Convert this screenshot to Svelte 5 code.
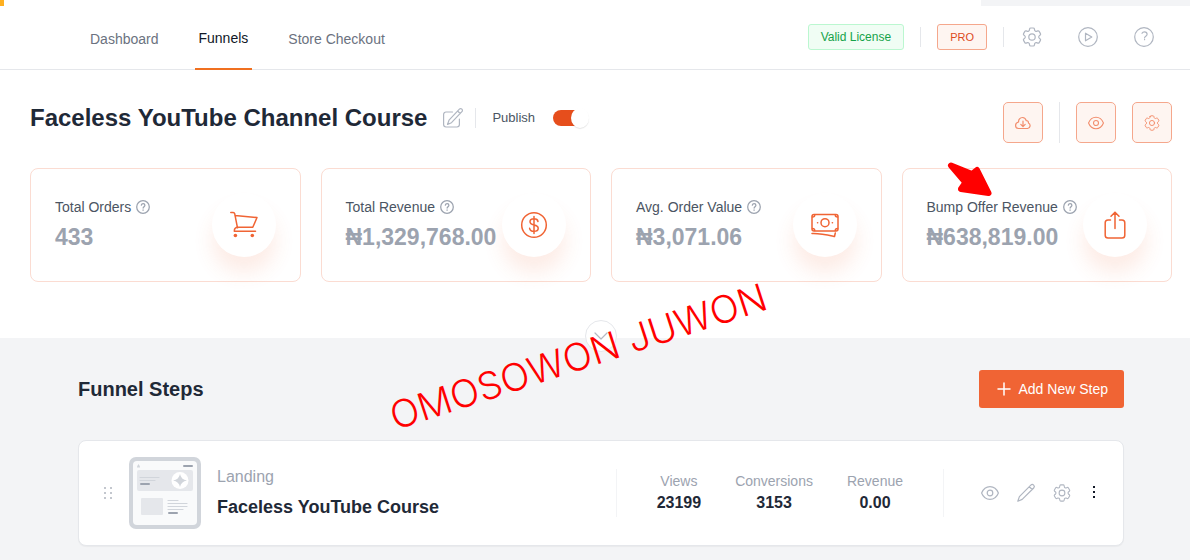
<script lang="ts">
  type Stat = { label: string; value: string; icon: 'cart' | 'dollar' | 'cash' | 'share' };

  const stats: Stat[] = [
    { label: 'Total Orders', value: '433', icon: 'cart' },
    { label: 'Total Revenue', value: '₦1,329,768.00', icon: 'dollar' },
    { label: 'Avg. Order Value', value: '₦3,071.06', icon: 'cash' },
    { label: 'Bump Offer Revenue', value: '₦638,819.00', icon: 'share' },
  ];

  const results = [
    { label: 'Views', value: '23199' },
    { label: 'Conversions', value: '3153' },
    { label: 'Revenue', value: '0.00' },
  ];

  let published = $state(true);
</script>

{#snippet gear(size: number)}
  <svg width={size} height={size} viewBox="2 2 20 20" aria-hidden="true">
    <path d="M9.594 3.94c.09-.542.56-.94 1.11-.94h2.593c.55 0 1.02.398 1.11.94l.213 1.281c.063.374.313.686.645.87.074.04.147.083.22.127.325.196.72.257 1.075.124l1.217-.456a1.125 1.125 0 0 1 1.37.49l1.296 2.247a1.125 1.125 0 0 1-.26 1.431l-1.003.827c-.293.241-.438.613-.43.992a7.723 7.723 0 0 1 0 .255c-.008.378.137.75.43.991l1.004.827c.424.35.534.955.26 1.43l-1.298 2.247a1.125 1.125 0 0 1-1.369.491l-1.217-.456c-.355-.133-.75-.072-1.076.124a6.47 6.47 0 0 1-.22.128c-.331.183-.581.495-.644.869l-.213 1.281c-.09.543-.56.94-1.11.94h-2.594c-.55 0-1.019-.398-1.11-.94l-.213-1.281c-.062-.374-.312-.686-.644-.87a6.52 6.52 0 0 1-.22-.127c-.325-.196-.72-.257-1.076-.124l-1.217.456a1.125 1.125 0 0 1-1.369-.49l-1.297-2.247a1.125 1.125 0 0 1 .26-1.431l1.004-.827c.292-.24.437-.613.43-.991a6.932 6.932 0 0 1 0-.255c.007-.38-.138-.751-.43-.992l-1.004-.827a1.125 1.125 0 0 1-.26-1.43l1.297-2.247a1.125 1.125 0 0 1 1.37-.491l1.216.456c.356.133.751.072 1.076-.124.072-.044.146-.086.22-.128.332-.183.582-.495.644-.869l.214-1.28Z" />
    <circle cx="12" cy="12" r="3.2" />
  </svg>
{/snippet}

{#snippet eye(size: number)}
  <svg width={size} height={size} viewBox="0 0 18 18" aria-hidden="true">
    <path d="M.6 9C2.2 5 5.300 2.600 9 2.600S15.800 5 17.400 9C15.800 13 12.700 15.400 9 15.400S2.200 13 .6 9Z" />
    <circle cx="9" cy="9" r="2.800" />
  </svg>
{/snippet}

{#snippet question(size: number)}
  <svg width={size} height={size} viewBox="0 0 20 20" aria-hidden="true">
    <circle cx="10" cy="10" r="9" />
    <path d="M7.600 7.400C7.900 6 9 5.300 10.200 5.300c1.500 0 2.500 1 2.500 2.300 0 1.900-2.300 2-2.500 3.900" />
    <path d="M10.100 14.200v.6" />
  </svg>
{/snippet}

<div class="page">
  <span class="corner-mark"></span>
  <span class="corner-bar"></span>

  <header class="topbar">
    <nav class="tabs">
      <a href="#dashboard">Dashboard</a>
      <a href="#funnels" class="active">Funnels</a>
      <a href="#checkout">Store Checkout</a>
    </nav>
    <div class="tools">
      <span class="badge license">Valid License</span>
      <span class="rule"></span>
      <span class="badge pro">PRO</span>
      <span class="rule"></span>
      <div class="icons">
        <button class="icon-btn" aria-label="Settings">{@render gear(20)}</button>
        <button class="icon-btn" aria-label="Tutorials">
          <svg width="20" height="20" viewBox="0 0 20 20" aria-hidden="true">
            <circle cx="10" cy="10" r="9.3" />
            <path d="M7.500 6.200v7.600l6.300-3.800Z" />
          </svg>
        </button>
        <button class="icon-btn" aria-label="Help">
          <svg width="20" height="20" viewBox="0 0 20 20" aria-hidden="true">
            <circle cx="10" cy="10" r="9.3" />
            <path d="M8 6.300C8.500 5.300 9.300 4.800 10.400 4.800c1.600 0 2.700 1 2.700 2.400 0 2-2.300 2-2.500 3.600M10.600 12.400v.3" />
          </svg>
        </button>
      </div>
    </div>
  </header>

  <section class="overview">
    <div class="title-row">
      <h1>Faceless YouTube Channel Course</h1>
      <button class="icon-btn edit" aria-label="Edit title">
        <svg width="20" height="20" viewBox="0 0 20 20" aria-hidden="true">
          <path d="M9.500 4H3a2.400 2.400 0 0 0-2.400 2.400v10.200A2.400 2.400 0 0 0 3 19h11a2.400 2.400 0 0 0 2.400-2.400V11" />
          <path d="M16.400 1.200a1.700 1.700 0 0 1 2.500 2.500L8.500 14.700l-4 1.700 1.500-4.200ZM14.600 3l2.600 2.500" />
        </svg>
      </button>
      <span class="rule"></span>
      <label for="publish">Publish</label>
      <input id="publish" class="switch" type="checkbox" bind:checked={published} />

      <div class="actions">
        <button class="action" aria-label="Export">
          <svg width="16" height="16" viewBox="0 0 16 16" aria-hidden="true">
            <path d="M3.600 13.500h9a2.900 2.900 0 0 0 .8-5.500c.2-1.600-.9-2.500-2.200-2.400C10.700 3.600 9.200 2.500 7.500 2.500 5 2.500 3.300 4.600 3.600 7 1.800 7.500.6 8.700.6 10.500c0 1.700 1.300 3 3 3Z" />
            <path d="M8 6v5.500M5.800 9.400 8 11.600l2.200-2.200" />
          </svg>
        </button>
        <span class="rule tall"></span>
        <button class="action" aria-label="Preview">{@render eye(16)}</button>
        <button class="action" aria-label="Funnel settings">{@render gear(16)}</button>
      </div>
    </div>

    <div class="stats">
      {#each stats as stat}
        <article class="stat">
          <div class="stat-text">
            <p class="stat-label">{stat.label} {@render question(14)}</p>
            <p class="stat-value">{stat.value}</p>
          </div>
          <span class="disc">
            <svg width="28" height="28" viewBox="0 0 28 28" aria-hidden="true">
              {#if stat.icon === 'cart'}
                <path d="M.8 1.500h2.400c.8 0 1.300.5 1.500 1.200L7.500 16.800M5 4.600 27 6.500 22.800 16.300H8c-2.200 0-3.700 1.500-3.700 3.900H25.500" />
                <circle class="solid" cx="5.400" cy="24.500" r="1.800" />
                <circle class="solid" cx="22.300" cy="24.500" r="1.800" />
              {:else if stat.icon === 'dollar'}
                <circle cx="14" cy="14" r="12.300" />
                <path d="M18 10.500c-.3-1.700-1.800-2.700-4-2.700-2.300 0-4 1.100-4 3s1.500 2.600 4 3.100c2.700.5 4.200 1.400 4.200 3.300s-1.700 3.100-4.200 3.100c-2.500 0-4.100-1.100-4.400-3M14 5.500v17" />
              {:else if stat.icon === 'cash'}
                <rect x="1" y="3.500" width="26" height="16.500" rx="2" />
                <circle cx="14" cy="11.700" r="4" />
                <path d="M1.500 6c1.500 0 2.200-.8 2.200-2M26.500 6c-1.500 0-2.200-.8-2.200-2M1.500 17.500c1.500 0 2.200.8 2.200 2M26.500 17.500c-1.500 0-2.200.8-2.200 2M6.500 11.700h.2M21.300 11.700h.2M1 22.500c8.500-.3 15 1.300 22.500 3l.8-3.500" />
              {:else}
                <path d="M9.500 9H7a2.800 2.800 0 0 0-2.800 2.800v12.400A2.800 2.800 0 0 0 7 27h14a2.800 2.800 0 0 0 2.800-2.800V11.800A2.800 2.800 0 0 0 21 9h-2.500M14 17.500V1.200M10 5.300l4-4.100 4 4.100" />
              {/if}
            </svg>
          </span>
        </article>
      {/each}
    </div>

    <button class="expander" aria-label="Show more">
      <svg width="12" height="6" viewBox="0 0 12 6" aria-hidden="true"><path d="m0 0 6 6 6-6" /></svg>
    </button>
    <span class="watermark">OMOSOWON JUWON</span>
    <svg class="arrow" width="48" height="38" viewBox="0 0 48 38" aria-hidden="true">
      <path d="M6 4.500 27 13 32 9 43.500 32 16 28 20.500 21.500Z" />
    </svg>
  </section>

  <main class="steps">
    <div class="steps-head">
      <h2>Funnel Steps</h2>
      <button class="add">
        <svg width="14" height="14" viewBox="0 0 14 14" aria-hidden="true"><path d="M7 1v12M1 7h12" /></svg>
        Add New Step
      </button>
    </div>

    <article class="step">
      <svg class="grip" width="10" height="14" viewBox="0 0 10 14" aria-hidden="true">
        <path d="M1 1h2v2H1zM7 1h2v2H7zM1 6h2v2H1zM7 6h2v2H7zM1 11h2v2H1zM7 11h2v2H7z" />
      </svg>
      <svg class="thumb" width="72" height="72" viewBox="0 0 72 72" aria-hidden="true">
        <rect width="72" height="72" rx="7" fill="#d1d5db" />
        <rect x="4" y="4" width="64" height="64" rx="4" fill="#f9fafb" />
        <path d="M8 9.500 9.500 7 11 9.500v1H8z" fill="#d1d5db" />
        <rect x="54" y="8" width="10" height="2" rx="1" fill="#9ca3af" />
        <rect x="8" y="13" width="56" height="21" rx="2" fill="#e5e7eb" />
        <path d="M11 20.500h19M11 23.500h15M39 43.500h10M39 46.500h19M39 49.500h19M39 52.500h15" stroke="#d1d5db" />
        <rect x="11" y="26" width="10" height="2" rx="1" fill="#9ca3af" />
        <circle cx="51" cy="23.500" r="8.500" fill="#fff" />
        <path d="M51 17q1 5.500 7 6.500-6 1-7 6.500-1-5.500-7-6.500 6-1 7-6.500Z" fill="#d1d5db" />
        <rect x="12" y="41" width="22" height="17" rx="1" fill="#e5e7eb" />
        <rect x="39" y="55" width="10" height="2" rx="1" fill="#9ca3af" />
      </svg>
      <div class="step-text">
        <p class="step-type">Landing</p>
        <h3>Faceless YouTube Course</h3>
      </div>
      <dl class="results">
        {#each results as result}
          <div>
            <dt>{result.label}</dt>
            <dd>{result.value}</dd>
          </div>
        {/each}
      </dl>
      <div class="step-actions">
        <button class="icon-btn" aria-label="View step">{@render eye(18)}</button>
        <button class="icon-btn" aria-label="Edit step">
          <svg width="18" height="18" viewBox="0 0 18 18" aria-hidden="true">
            <path d="M13.800 1.200a1.900 1.900 0 0 1 2.900 2.800L5.200 15.400.8 17.200l1.600-4.600ZM12.300 2.800l2.900 2.700" />
          </svg>
        </button>
        <button class="icon-btn" aria-label="Step settings">{@render gear(18)}</button>
        <button class="icon-btn more" aria-label="More">
          <svg width="10" height="18" viewBox="0 0 10 18" aria-hidden="true">
            <path d="M4 2h2v2H4zM4 7h2v2H4zM4 12h2v2H4z" />
          </svg>
        </button>
      </div>
    </article>
  </main>
</div>

<style>
  :global(body) {
    margin: 0;
    background: #f3f4f6;
  }

  .page {
    position: relative;
    font-family: 'Liberation Sans', Arial, sans-serif;
    font-size: 14px;
    line-height: 20px;
    color: #1f2937;
  }

  h1,
  h2,
  h3,
  p,
  dl,
  dd {
    margin: 0;
  }

  button {
    padding: 0;
    font: inherit;
    cursor: pointer;
  }

  svg {
    display: block;
    flex: none;
    overflow: visible;
    fill: none;
    stroke: currentColor;
    stroke-width: 1.2;
    stroke-linecap: round;
    stroke-linejoin: round;
  }

  .corner-mark,
  .corner-bar {
    position: absolute;
    top: 0;
    height: 6px;
  }

  .corner-mark {
    left: 0;
    width: 4px;
    background: #ffb020;
  }

  .corner-bar {
    right: 0;
    width: 209px;
    background: #f3f4f6;
  }

  /* Top bar */
  .topbar {
    display: flex;
    justify-content: space-between;
    padding: 0 36px 0 86px;
    background: #fff;
    border-bottom: 1px solid #e5e7eb;
  }

  .tabs {
    display: flex;
    gap: 32px;
    margin-bottom: -1px;
  }

  .tabs a {
    padding: 0 4px;
    line-height: 78px;
    height: 70px;
    box-sizing: border-box;
    color: #6b7280;
    text-decoration: none;
  }

  .tabs a.active {
    line-height: 76px;
    color: #111827;
    border-bottom: 2px solid #f07020;
  }

  .tools {
    display: flex;
    align-items: center;
    gap: 16px;
    padding-top: 5px;
  }

  .badge {
    padding: 0 12px;
    border: 1px solid;
    border-radius: 3px;
    font-size: 12px;
    line-height: 24px;
  }

  .license {
    color: #16a34a;
    background: #f0fdf4;
    border-color: #bbf7d0;
  }

  .pro {
    font-size: 11px;
    color: #dd4a1c;
    background: #fef5f1;
    border-color: #f5a78c;
  }

  .rule {
    width: 1px;
    height: 20px;
    background: #e5e7eb;
  }

  .rule.tall {
    height: 41px;
  }

  .icons {
    display: flex;
    gap: 36px;
    padding-left: 2px;
  }

  .icon-btn {
    border: none;
    background: none;
    color: #b0b6c1;
  }

  /* Overview */
  .overview {
    position: relative;
    padding: 32px 18px 56px 30px;
    background: #fff;
  }

  .title-row {
    display: flex;
    align-items: center;
    margin-bottom: 25px;
  }

  .title-row > :not(.actions) {
    margin-bottom: 9px;
  }

  h1 {
    font-size: 24px;
    line-height: 32px;
  }

  .title-row .edit {
    margin: 0 12px 9px 16px;
  }

  label {
    margin: 0 18px 0 16px;
    font-size: 13px;
    color: #4b5563;
  }

  .switch {
    appearance: none;
    display: flex;
    align-items: center;
    width: 36px;
    height: 16px;
    margin: 0;
    border-radius: 8px;
    background: linear-gradient(90deg, #e64e1c 24px, transparent 24px);
    cursor: pointer;
  }

  .switch::before {
    content: '';
    width: 20px;
    height: 20px;
    border-radius: 50%;
    background: #fff;
    box-shadow: 0 1px 1px rgba(0, 0, 0, 0.1);
  }

  .switch:checked::before {
    margin-left: 18px;
  }

  .switch:not(:checked) {
    background: #d1d5db;
  }

  .actions {
    display: flex;
    gap: 16px;
    margin-left: auto;
  }

  .action {
    display: grid;
    place-items: center;
    width: 40px;
    height: 41px;
    color: #f28d6c;
    background: #fef5f1;
    border: 1px solid #f5a78c;
    border-radius: 5px;
  }

  .stats {
    display: grid;
    grid-template-columns: repeat(4, 1fr);
    gap: 20px;
  }

  .stat {
    display: flex;
    align-items: center;
    justify-content: space-between;
    height: 112px;
    padding: 0 24px;
    border: 1px solid #fbdcd2;
    border-radius: 8px;
  }

  .stat-text {
    padding-top: 4px;
  }

  .stat-label {
    display: flex;
    align-items: center;
    gap: 5px;
    color: #4b5563;
    white-space: nowrap;
  }

  .stat-label :global(svg) {
    color: #9ca3af;
    stroke-width: 1.8;
  }

  .stat-value {
    font-size: 23px;
    font-weight: 700;
    line-height: 40px;
    color: #9ca3af;
  }

  .disc {
    display: grid;
    place-items: center;
    flex: none;
    width: 64px;
    height: 64px;
    margin-left: -16px;
    border-radius: 50%;
    color: #f06434;
    background: #fff;
    box-shadow: 0 16px 20px rgba(240, 100, 52, 0.12);
  }

  .disc svg {
    stroke-width: 1.5;
  }

  .disc .solid {
    fill: currentColor;
    stroke: none;
  }

  .expander {
    position: absolute;
    left: calc(50% - 10px);
    bottom: -14px;
    display: grid;
    place-items: center;
    width: 32px;
    height: 32px;
    color: #b4b9c2;
    background: #fff;
    border: 1px solid #e5e7eb;
    border-radius: 50%;
  }

  .watermark {
    position: absolute;
    z-index: 1;
    left: 397px;
    top: 326px;
    font-family: Inter, sans-serif;
    font-size: 38px;
    font-weight: 300;
    line-height: 40px;
    color: #f00;
    white-space: nowrap;
    transform: rotate(-18deg);
    transform-origin: left bottom;
  }

  .arrow {
    position: absolute;
    right: 197px;
    top: 91px;
    color: #f00;
    fill: #f00;
    stroke-width: 6;
  }

  /* Steps */
  .steps {
    padding: 32px 66px 14px 78px;
  }

  .steps-head {
    display: flex;
    align-items: center;
    justify-content: space-between;
    margin-bottom: 32px;
  }

  h2 {
    font-size: 20px;
    line-height: 28px;
  }

  .add {
    display: flex;
    align-items: center;
    gap: 8px;
    padding: 9px 16px 9px 18px;
    line-height: 20px;
    color: #fff;
    background: #f06434;
    border: none;
    border-radius: 3px;
  }

  .add svg {
    stroke-width: 1.5;
  }

  .step {
    display: flex;
    align-items: center;
    padding: 16px 24px;
    background: #fff;
    border: 1px solid #e5e7eb;
    border-radius: 8px;
    box-shadow: 0 1px 1px rgba(0, 0, 0, 0.04);
  }

  .grip {
    margin-right: 16px;
    color: #c3c7ce;
    fill: currentColor;
    stroke: none;
  }

  .thumb {
    margin-right: 16px;
    stroke: none;
  }

  .step-text {
    margin-right: auto;
  }

  .step-type {
    margin-bottom: 4px;
    font-size: 16px;
    line-height: 24px;
    color: #9ca3af;
  }

  h3 {
    font-size: 18px;
    line-height: 28px;
  }

  .results {
    display: flex;
    align-items: center;
    gap: 34px;
    height: 48px;
    padding: 0 40px;
    border: solid #f3f4f6;
    border-width: 0 1px;
    text-align: center;
  }

  dt {
    color: #9ca3af;
  }

  dd {
    font-size: 16px;
    font-weight: 700;
    line-height: 24px;
  }

  .step-actions {
    display: flex;
    align-items: center;
    gap: 18px;
    padding-left: 37px;
  }

  .more {
    color: #111827;
  }

  .more svg {
    fill: currentColor;
    stroke: none;
  }
</style>
